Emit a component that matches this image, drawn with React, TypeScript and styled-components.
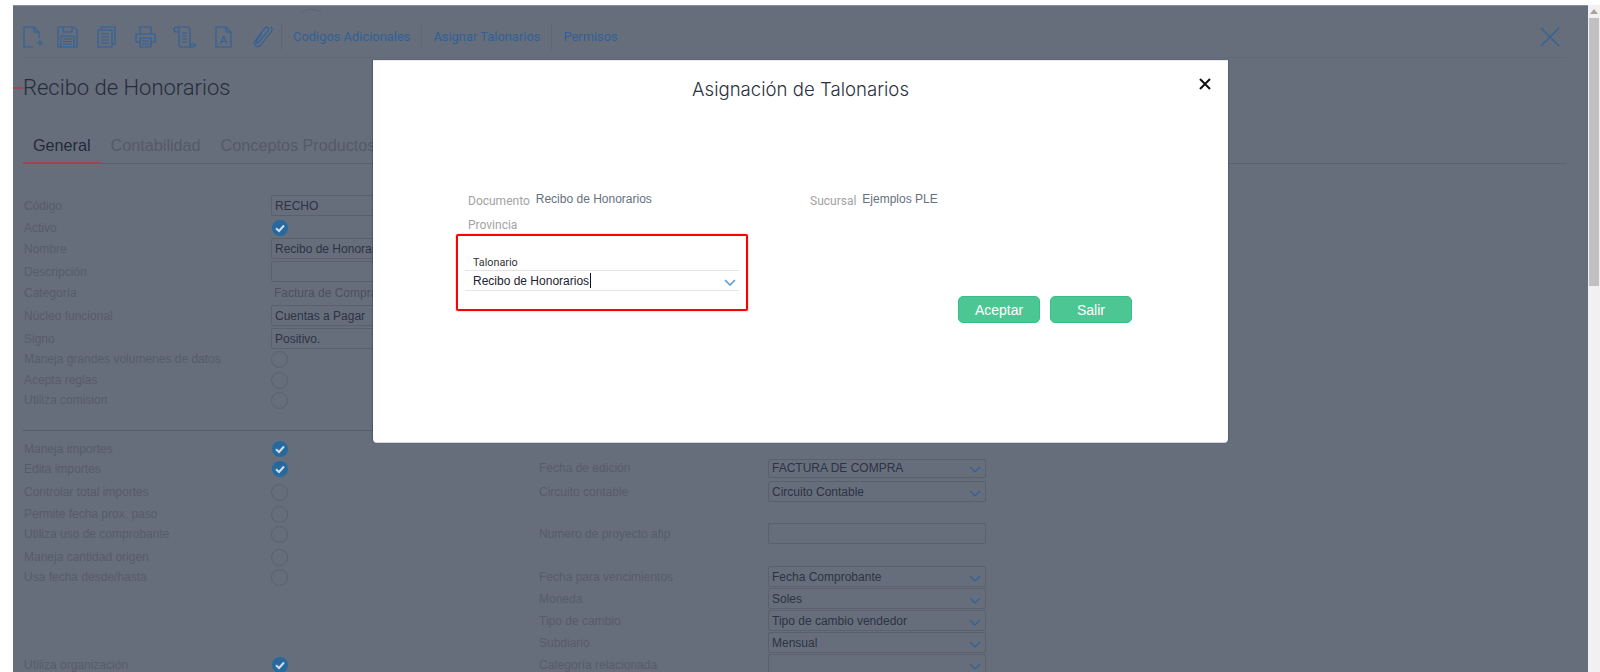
import { createGlobalStyle, styled } from "styled-components";

const GlobalStyle = createGlobalStyle`
  html, body {
    margin: 0;
    padding: 0;
    height: 100%;
    overflow: hidden;
    background: #fff;
    font-family: "Liberation Sans", Arial, sans-serif;
  }
`;

const blue = "#2f6199";

const Page = styled.div`
  display: flex;
  height: 672px;
  padding: 5px 0 0 13px;
  box-sizing: border-box;
`;

const Shell = styled.main`
  position: relative;
  flex: 1;
  min-width: 0;
  background: #676e7b;
  border-top: 1px solid #8b919b;
  overflow: hidden;
  padding: 0 21px 0 10px;
`;

const Toolbar = styled.div`
  display: flex;
  align-items: center;
  height: 52px;
  box-sizing: border-box;
  padding-top: 10px;
  border-bottom: 1px solid #616875;
`;

const IconButton = styled.span<{ $w: number; $gap: number }>`
  display: flex;
  width: ${(p) => p.$w}px;
  margin-right: ${(p) => p.$gap}px;
  color: ${blue};
`;

const ToolLink = styled.a`
  display: flex;
  align-items: center;
  height: 27px;
  padding: 0 11px;
  font-family: Roboto, sans-serif;
  font-size: 12.9px;
  line-height: 31px;
  color: ${blue};
  border-left: 1px solid #606774;
`;

const CloseMain = styled.span`
  margin-left: auto;
  margin-right: 7px;
  display: flex;
  color: ${blue};
`;

const Arc = styled.div`
  position: absolute;
  left: 287px;
  top: 3px;
  width: 22px;
  height: 10px;
  border-top: 1px solid #5a606d;
  border-radius: 50%;
`;

const Heading = styled.h1`
  position: relative;
  margin: 15px 0 0;
  height: 30px;
  line-height: 30px;
  font-family: Roboto, sans-serif;
  font-weight: 300;
  font-size: 22px;
  color: #262c3a;

  &::before {
    content: "";
    position: absolute;
    left: -10px;
    top: 14px;
    width: 10px;
    height: 2px;
    background: #a0444f;
  }
`;

const Tabs = styled.div`
  display: flex;
  margin-top: 31px;
  height: 29px;
  border-bottom: 1px solid #5a616e;
`;

const Tab = styled.div<{ $active?: boolean }>`
  padding: 0 10px;
  height: 30px;
  box-sizing: border-box;
  font-family: "Liberation Sans", Arial, sans-serif;
  font-size: 16.2px;
  line-height: 22px;
  color: ${(p) => (p.$active ? "#232a3a" : "#535a68")};
  border-bottom: 2px solid ${(p) => (p.$active ? "#a0444f" : "transparent")};
`;

const FormGrid = styled.div`
  display: grid;
  grid-template-columns: 515px 1fr;
  margin-top: 31px;
`;

const Column = styled.div<{ $top?: number }>`
  display: flex;
  flex-direction: column;
  padding-top: ${(p) => p.$top ?? 0}px;
`;

const Row = styled.div<{ $gap?: number; $lw: number; $w: number }>`
  display: grid;
  grid-template-columns: ${(p) => p.$lw}px ${(p) => p.$w}px;
  align-items: center;
  height: 20px;
  margin-top: ${(p) => p.$gap ?? 0}px;
  padding-left: 1px;
`;

const Label = styled.label`
  font-size: 12px;
  color: #555c6a;
  white-space: nowrap;
`;

const Input = styled.div<{ $h?: number }>`
  position: relative;
  display: flex;
  align-items: center;
  height: ${(p) => p.$h ?? 21}px;
  padding: 0 3px;
  box-sizing: border-box;
  border: 1px solid #5a606d;
  border-radius: 2px;
  font-size: 12px;
  color: #2c3344;
  white-space: nowrap;
  overflow: hidden;
`;

const PlainValue = styled.span`
  padding-left: 3px;
  font-size: 12px;
  color: #4a515f;
`;

const Chevron = styled.svg`
  position: absolute;
  right: 4px;
  top: 50%;
  margin-top: -2px;
  width: 12px;
  height: 7px;
  fill: none;
  stroke: currentColor;
  stroke-width: 1.2;
`;

const SelectArrow = styled.span`
  color: ${blue};
`;

const Tick = styled.span`
  display: flex;
  width: 16px;
  height: 16px;
  margin-left: 1px;
`;

const Radio = styled.span`
  width: 15px;
  height: 15px;
  border: 1px solid #5a606d;
  border-radius: 50%;
`;

const Divider = styled.div`
  height: 1px;
  background: #565d6a;
  margin: 20px 0 8px;
`;

const Scrollbar = styled.aside`
  position: relative;
  width: 12px;
  flex: none;
  background: #f1f1f1;
`;

const ScrollArrow = styled.span`
  display: block;
  width: 0;
  margin: 4px auto 0;
  border: 4px solid transparent;
  border-top: 0;
  border-bottom: 5px solid #a3a3a3;
`;

const ScrollThumb = styled.div`
  position: absolute;
  top: 13px;
  left: 1px;
  right: 1px;
  height: 268px;
  background: #c1c1c1;
`;

const Modal = styled.section`
  position: absolute;
  left: 360px;
  top: 54px;
  width: 855px;
  height: 383px;
  box-sizing: border-box;
  background: #fff;
  border-top: 1px solid #e8e8e8;
  border-bottom: 1px solid #d8d8d8;
  border-radius: 0 0 4px 4px;
  box-shadow: -1px 0 1px rgba(40, 50, 70, 0.35), 1px 0 1px rgba(40, 50, 70, 0.25);
`;

const ModalTitle = styled.h2`
  margin: 0;
  height: 57px;
  line-height: 56px;
  text-align: center;
  font-family: Inter, sans-serif;
  font-weight: 300;
  font-size: 18.6px;
  color: #2b3140;
`;

const ModalClose = styled.button`
  position: absolute;
  top: 17px;
  right: 17px;
  display: flex;
  padding: 0;
  border: 0;
  background: none;
  color: #111;
`;

const ModalBody = styled.div`
  display: grid;
  grid-template-columns: 354px 1fr;
  padding: 75px 0 0 83px;
`;

const Field = styled.div<{ $indent: number; $top?: number }>`
  display: flex;
  align-items: baseline;
  gap: 6px;
  margin-top: ${(p) => p.$top ?? 0}px;
  padding-left: ${(p) => p.$indent}px;
  height: 16px;
  line-height: 16px;
`;

const FieldLabel = styled.span`
  font-family: Roboto, sans-serif;
  font-size: 12px;
  color: #a3a3a3;
`;

const FieldValue = styled.span`
  position: relative;
  top: -2px;
  font-size: 12px;
  color: #667080;
`;

const Highlight = styled.div`
  margin-top: 1px;
  width: 292px;
  height: 77px;
  box-sizing: border-box;
  padding: 19px 7px 0;
  border: 2px solid #f00;
  border-radius: 2px;
  box-shadow: 0 0 1px #f00;
`;

const ComboLabel = styled.div`
  height: 15px;
  line-height: 16px;
  padding-left: 8px;
  font-family: Roboto, sans-serif;
  font-size: 10.8px;
  color: #333;
`;

const Combo = styled.div`
  position: relative;
  display: flex;
  align-items: center;
  height: 21px;
  box-sizing: border-box;
  padding-left: 8px;
  border-top: 1px solid #e4e4e4;
  border-bottom: 1px solid #e4e4e4;
  font-size: 12px;
  color: #1d2230;
`;

const Caret = styled.span`
  display: inline-block;
  width: 1px;
  height: 15px;
  margin-left: 1px;
  background: #111;
`;

const ComboArrow = styled.span`
  color: #5b9bd5;

  svg {
    right: 3px;
    stroke-width: 1.6;
  }
`;

const Actions = styled.div`
  display: flex;
  gap: 10px;
  margin: 87px 0 0 148px;
`;

const ActionButton = styled.button`
  width: 82px;
  height: 27px;
  padding: 0;
  background: #4cc794;
  border: 1px solid #35c08a;
  border-radius: 5px;
  font-family: "Liberation Sans", Arial, sans-serif;
  font-size: 14px;
  color: #fff;
`;

const Stroke = styled.svg`
  display: block;
  fill: none;
  stroke: currentColor;
  stroke-width: 1.2;
`;

function FileIcon() {
  return (
    <Stroke width="21" height="22" viewBox="0 0 21 22">
      <path d="M10 21H1V1h10l5 5v6M11 1v5h5M17 14v6M14 17h6" />
    </Stroke>
  );
}

function SaveIcon() {
  return (
    <Stroke width="21" height="22" viewBox="0 0 21 22">
      <path d="M1 1h16l3 3v17H1zM6 1v5h9V1M4 21V10h13v11M6 13h9M6 15.500h9M6 18h9" />
    </Stroke>
  );
}

function CopyIcon() {
  return (
    <Stroke width="19" height="22" viewBox="0 0 19 22">
      <path d="M4 3V1h14v17h-3M1 4h14v17H1zM4 8h8M4 11h8M4 14h8M4 17h8" />
    </Stroke>
  );
}

function PrintIcon() {
  return (
    <Stroke width="21" height="22" viewBox="0 0 21 22">
      <path d="M5 8V1h11v7M5 16H1V8h19v8h-4M5 12h11v9H5zM7 15h7M7 18h7" />
    </Stroke>
  );
}

function ScrollIcon() {
  return (
    <Stroke width="23" height="22" viewBox="0 0 23 22">
      <path d="M1 4c0-2 1-3 3-3h10c2 0 3 1 3 3v15c0 1 1 2 2 2H8c-1.500 0-2-1-2-2V4c0-2-1-3-2-3M1 4c0 1.500 1 2 2 2h3M17 18h5v1c0 1-1 2-3 2M9 7h5M9 10h5M9 13h5M9 16h5" />
    </Stroke>
  );
}

function DocIcon() {
  return (
    <Stroke width="17" height="22" viewBox="0 0 17 22">
      <path d="M1 1h10l5 5v15H1zM11 1v5h5" />
      <text x="8.500" y="18" textAnchor="middle" fontSize="11" fontFamily="Liberation Sans" fill="currentColor" stroke="none">
        A
      </text>
    </Stroke>
  );
}

function ClipIcon() {
  return (
    <Stroke width="20" height="22" viewBox="0 0 20 22">
      <path d="M9 7l-5.500 8c-1 2 .5 3 1.500 2L15 5c2-3-1-5-3-3L2 15c-2 4 2 7 5 5L18 6c1.500-2 1-4 0-5" />
    </Stroke>
  );
}

function Check() {
  return (
    <Tick>
      <svg width="16" height="16" viewBox="0 0 16 16">
        <circle cx="8" cy="8" r="8" fill="#26699f" />
        <path d="M4 8.300l3 2.700 5-5.500" fill="none" stroke="#d5dce5" strokeWidth="2" />
      </svg>
    </Tick>
  );
}

function Arrow() {
  return (
    <Chevron viewBox="0 0 12 7">
      <path d="M1 1l5 5 5-5" />
    </Chevron>
  );
}

type RowData = {
  label: string;
  gap?: number;
  kind: "input" | "select" | "check" | "radio" | "plain";
  value?: string;
  h?: number;
};

const upperRows: RowData[] = [
  { label: "Código", kind: "input", value: "RECHO" },
  { label: "Activo", kind: "check", gap: 3 },
  { label: "Nombre", kind: "input", value: "Recibo de Honorarios" },
  { label: "Descripción", kind: "input", gap: 3 },
  { label: "Categoría", kind: "plain", value: "Factura de Compra", gap: 2 },
  { label: "Núcleo funcional", kind: "input", value: "Cuentas a Pagar", gap: 2 },
  { label: "Signo", kind: "input", value: "Positivo.", gap: 3 },
  { label: "Maneja grandes volumenes de datos", kind: "radio", gap: 1 },
  { label: "Acepta reglas", kind: "radio", gap: 1 },
  { label: "Utiliza comision", kind: "radio" },
];

const lowerRows: RowData[] = [
  { label: "Maneja importes", kind: "check" },
  { label: "Edita importes", kind: "check" },
  { label: "Controlar total importes", kind: "radio", gap: 3 },
  { label: "Permite fecha prox. paso", kind: "radio", gap: 2 },
  { label: "Utiliza uso de comprobante", kind: "radio" },
  { label: "Maneja cantidad origen", kind: "radio", gap: 3 },
  { label: "Usa fecha desde/hasta", kind: "radio" },
  { label: "Utiliza organización", kind: "check", gap: 68 },
];

const rightRows: RowData[] = [
  { label: "Fecha de edición", kind: "select", value: "FACTURA DE COMPRA", h: 19 },
  { label: "Circuito contable", kind: "select", value: "Circuito Contable", gap: 3 },
  { label: "Numero de proyecto afip", kind: "input", gap: 22 },
  { label: "Fecha para vencimientos", kind: "select", value: "Fecha Comprobante", gap: 23 },
  { label: "Moneda", kind: "select", value: "Soles", gap: 2 },
  { label: "Tipo de cambio", kind: "select", value: "Tipo de cambio vendedor", gap: 2 },
  { label: "Subdiario", kind: "select", value: "Mensual", gap: 2 },
  { label: "Categoría relacionada", kind: "select", gap: 2 },
];

function FormRow({ row, labelWidth, width }: { row: RowData; labelWidth: number; width: number }) {
  return (
    <Row $gap={row.gap} $lw={labelWidth} $w={width}>
      <Label>{row.label}</Label>
      {row.kind === "check" && <Check />}
      {row.kind === "radio" && <Radio />}
      {row.kind === "plain" && <PlainValue>{row.value}</PlainValue>}
      {row.kind === "input" && <Input $h={row.h}>{row.value}</Input>}
      {row.kind === "select" && (
        <Input $h={row.h}>
          {row.value}
          <SelectArrow>
            <Arrow />
          </SelectArrow>
        </Input>
      )}
    </Row>
  );
}

export default function App() {
  return (
    <>
      <GlobalStyle />
      <Page>
        <Shell>
          <Arc />
          <Toolbar>
            <IconButton $w={21} $gap={13}><FileIcon /></IconButton>
            <IconButton $w={21} $gap={19}><SaveIcon /></IconButton>
            <IconButton $w={19} $gap={19}><CopyIcon /></IconButton>
            <IconButton $w={21} $gap={17}><PrintIcon /></IconButton>
            <IconButton $w={23} $gap={19}><ScrollIcon /></IconButton>
            <IconButton $w={17} $gap={21}><DocIcon /></IconButton>
            <IconButton $w={20} $gap={8}><ClipIcon /></IconButton>
            <ToolLink>Codigos Adicionales</ToolLink>
            <ToolLink>Asignar Talonarios</ToolLink>
            <ToolLink>Permisos</ToolLink>
            <CloseMain>
              <Stroke width="20" height="20" viewBox="0 0 20 20">
                <path d="M1 1l18 18M19 1L1 19" />
              </Stroke>
            </CloseMain>
          </Toolbar>
          <Heading>Recibo de Honorarios</Heading>
          <Tabs>
            <Tab $active>General</Tab>
            <Tab>Contabilidad</Tab>
            <Tab>Conceptos Productos</Tab>
          </Tabs>
          <FormGrid>
            <Column>
              {upperRows.map((row) => (
                <FormRow key={row.label} row={row} labelWidth={247} width={220} />
              ))}
              <Divider />
              {lowerRows.map((row) => (
                <FormRow key={row.label} row={row} labelWidth={247} width={220} />
              ))}
            </Column>
            <Column $top={263}>
              {rightRows.map((row) => (
                <FormRow key={row.label} row={row} labelWidth={229} width={218} />
              ))}
            </Column>
          </FormGrid>
          <Modal>
            <ModalTitle>Asignación de Talonarios</ModalTitle>
            <ModalClose>
              <svg width="12" height="12" viewBox="0 0 12 12">
                <path d="M1 1l10 10M11 1L1 11" stroke="currentColor" strokeWidth="2" fill="none" />
              </svg>
            </ModalClose>
            <ModalBody>
              <div>
                <Field $indent={12}>
                  <FieldLabel>Documento</FieldLabel>
                  <FieldValue>Recibo de Honorarios</FieldValue>
                </Field>
                <Field $indent={12} $top={8}>
                  <FieldLabel>Provincia</FieldLabel>
                </Field>
                <Highlight>
                  <ComboLabel>Talonario</ComboLabel>
                  <Combo>
                    Recibo de Honorarios
                    <Caret />
                    <ComboArrow>
                      <Arrow />
                    </ComboArrow>
                  </Combo>
                </Highlight>
              </div>
              <div>
                <Field $indent={0}>
                  <FieldLabel>Sucursal</FieldLabel>
                  <FieldValue>Ejemplos PLE</FieldValue>
                </Field>
                <Actions>
                  <ActionButton>Aceptar</ActionButton>
                  <ActionButton>Salir</ActionButton>
                </Actions>
              </div>
            </ModalBody>
          </Modal>
        </Shell>
        <Scrollbar>
          <ScrollArrow />
          <ScrollThumb />
        </Scrollbar>
      </Page>
    </>
  );
}
